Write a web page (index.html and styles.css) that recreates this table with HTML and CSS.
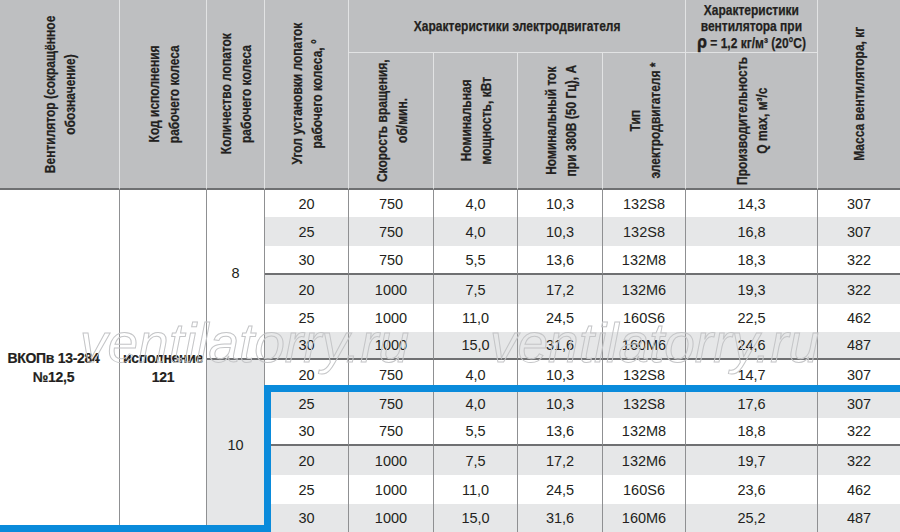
FILE: index.html
```html
<!DOCTYPE html>
<html lang="ru">
<head>
<meta charset="utf-8">
<title>ВКОПв 13-284 №12,5</title>
<link rel="stylesheet" href="styles.css">
</head>
<body>
<div class="wrap">
  <div class="grid">
    <div class="h rs2"><span class="v">Вентилятор (сокращённое<br>обозначение)</span></div>
    <div class="h rs2"><span class="v">Код исполнения<br>рабочего колеса</span></div>
    <div class="h rs2"><span class="v">Количество лопаток<br>рабочего колеса</span></div>
    <div class="h rs2"><span class="v">Угол установки лопаток<br>рабочего колеса, °</span></div>
    <div class="h grp cs4"><span class="hz">Характеристики электродвигателя</span></div>
    <div class="h grp top9"><span class="hz">Характеристики<br>вентилятора при<br><span class="rho">ρ</span> = 1,2 кг/м³ (20°С)</span></div>
    <div class="h rs2 last"><span class="v">Масса вентилятора, кг</span></div>
    <div class="h"><span class="v">Скорость вращения,<br>об/мин.</span></div>
    <div class="h"><span class="v">Номинальная<br>мощность, кВт</span></div>
    <div class="h"><span class="v">Номинальный ток<br>при 380В (50 Гц), А</span></div>
    <div class="h"><span class="v">Тип<br>электродвигателя *</span></div>
    <div class="h"><span class="v">Производительность<br>Q max, м³/с</span></div>

    <div class="c rs12 label first"><span>ВКОПв 13-284<br>№12,5</span></div>
    <div class="c rs12 label"><span>исполнение<br>121</span></div>
    <div class="c rs6 cnt sepb">8</div>

    <div class="r"><div class="c">20</div><div class="c">750</div><div class="c">4,0</div><div class="c">10,3</div><div class="c">132S8</div><div class="c">14,3</div><div class="c">307</div></div>
    <div class="r alt"><div class="c">25</div><div class="c">750</div><div class="c">4,0</div><div class="c">10,3</div><div class="c">132S8</div><div class="c">16,8</div><div class="c">307</div></div>
    <div class="r sep"><div class="c">30</div><div class="c">750</div><div class="c">5,5</div><div class="c">13,6</div><div class="c">132M8</div><div class="c">18,3</div><div class="c">322</div></div>
    <div class="r alt"><div class="c">20</div><div class="c">1000</div><div class="c">7,5</div><div class="c">17,2</div><div class="c">132M6</div><div class="c">19,3</div><div class="c">322</div></div>
    <div class="r"><div class="c">25</div><div class="c">1000</div><div class="c">11,0</div><div class="c">24,5</div><div class="c">160S6</div><div class="c">22,5</div><div class="c">462</div></div>
    <div class="r alt sep"><div class="c">30</div><div class="c">1000</div><div class="c">15,0</div><div class="c">31,6</div><div class="c">160M6</div><div class="c">24,6</div><div class="c">487</div></div>

    <div class="c rs6 cnt grey">10</div>

    <div class="r"><div class="c">20</div><div class="c">750</div><div class="c">4,0</div><div class="c">10,3</div><div class="c">132S8</div><div class="c">14,7</div><div class="c">307</div></div>
    <div class="r alt"><div class="c">25</div><div class="c">750</div><div class="c">4,0</div><div class="c">10,3</div><div class="c">132S8</div><div class="c">17,6</div><div class="c">307</div></div>
    <div class="r sep"><div class="c">30</div><div class="c">750</div><div class="c">5,5</div><div class="c">13,6</div><div class="c">132M8</div><div class="c">18,8</div><div class="c">322</div></div>
    <div class="r alt"><div class="c">20</div><div class="c">1000</div><div class="c">7,5</div><div class="c">17,2</div><div class="c">132M6</div><div class="c">19,7</div><div class="c">322</div></div>
    <div class="r"><div class="c">25</div><div class="c">1000</div><div class="c">11,0</div><div class="c">24,5</div><div class="c">160S6</div><div class="c">23,6</div><div class="c">462</div></div>
    <div class="r alt"><div class="c">30</div><div class="c">1000</div><div class="c">15,0</div><div class="c">31,6</div><div class="c">160M6</div><div class="c">25,2</div><div class="c">487</div></div>
  </div>

  <span class="wm wm1">ventilatorry.ru</span>
  <span class="wm wm2">ventilatorry.ru</span>

  <div class="hl"></div>
  <div class="hl-bottom"></div>
</div>
</body>
</html>
```
FILE: styles.css
```css
* { box-sizing: border-box; }
html, body { margin: 0; padding: 0; background: #ffffff; }
body { width: 900px; height: 532px; overflow: hidden; }

.wrap { position: relative; width: 900px; height: 532px; }

.grid {
  display: grid;
  grid-template-columns: 120px 87px 58px 84px 85px 84px 85px 83px 132px 82px;
  grid-template-rows: 53px 137px 27px 29px 29px 29px 28px 28px 29px 29px 28px 29px 29px 28px;
  color: #231f20;
  font-family: "Liberation Sans", Arial, sans-serif;
}

.h {
  background: #bebfc1;
  border-right: 1px solid #e2e3e4;
  border-bottom: 2px solid #6f7072;
  display: flex;
  align-items: center;
  justify-content: center;
  text-align: center;
  font-family: "Liberation Sans", Arial, sans-serif;
  font-weight: bold;
  font-size: 15px;
  line-height: 16px;
  min-width: 0;
  -webkit-text-stroke: 0.25px #231f20;
}
.h.grp { border-bottom: 1px solid #e2e3e4; }
.h.last { border-right: 0; }
.top9 { padding-top: 1px; }
.rho { font-family: "DejaVu Sans", sans-serif; font-size: 18px; }

.hz {
  display: inline-block;
  white-space: nowrap;
  flex-shrink: 0;
  transform: scaleX(0.8);
}

.v {
  writing-mode: vertical-rl;
  transform: rotate(180deg) scaleY(0.8);
  text-align: center;
  line-height: 19.5px;
  white-space: nowrap;
  flex-shrink: 0;
}

.rs2 { grid-row: span 2; }
.rs6 { grid-row: span 6; }
.rs12 { grid-row: span 12; }
.cs4 { grid-column: span 4; }

.r { display: contents; }

.c {
  display: flex;
  align-items: center;
  justify-content: center;
  border-right: 1px solid #8f9092;
  font-size: 14.5px;
  background: #ffffff;
  min-width: 0;
}
.r > .c:last-child { border-right: 0; }
.r.alt > .c { background: #e6e7e8; }
.r.sep > .c { border-bottom: 2px solid #6f7072; }

.label {
  font-weight: bold;
  font-size: 14px;
  letter-spacing: -0.3px;
  line-height: 19px;
  text-align: center;
  white-space: nowrap;
  padding-top: 14px;
  -webkit-text-stroke: 0.2px #231f20;
}
.label.first { padding-right: 12px; }

.cnt { padding-bottom: 2px; }
.sepb { border-bottom: 2px solid #6f7072; }
.grey { background: #e6e7e8; }

.wm {
  position: absolute;
  top: 316px;
  font-family: "Liberation Sans", Arial, sans-serif;
  font-style: italic;
  font-size: 55px;
  line-height: 55px;
  color: transparent;
  -webkit-text-stroke: 1px #c4c5c7;
  white-space: nowrap;
  pointer-events: none;
}
.wm1 { left: 80px; }
.wm2 { left: 490px; }

.hl {
  position: absolute;
  left: 264px;
  top: 385px;
  right: 0;
  bottom: 0;
  border-top: 7px solid #0a8bdb;
  border-left: 7px solid #0a8bdb;
}
.hl-bottom {
  position: absolute;
  left: 0;
  top: 525px;
  width: 271px;
  height: 7px;
  background: #0a8bdb;
}
```
